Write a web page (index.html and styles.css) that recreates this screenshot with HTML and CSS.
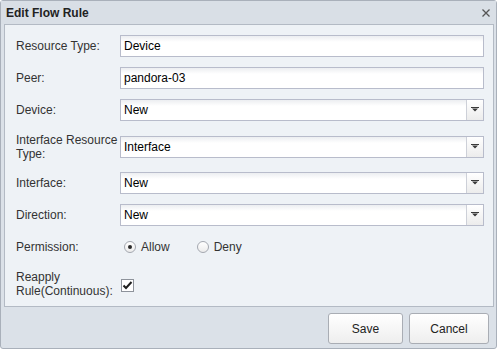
FILE: index.html
```html
<!DOCTYPE html>
<html>
<head>
<meta charset="utf-8">
<link rel="stylesheet" href="styles.css">
</head>
<body>
<div class="dialog">
  <div class="titlebar">
    <span class="title">Edit Flow Rule</span>
    <svg class="close" width="8" height="8" viewBox="0 0 8 8"><path d="M0.5 0.5L7.5 7.5M7.5 0.5L0.5 7.5" stroke="#555" stroke-width="1.3" fill="none"/></svg>
  </div>
  <div class="panel">
    <div class="row">
      <div class="label">Resource Type:</div>
      <div class="field">Device</div>
    </div>
    <div class="row">
      <div class="label">Peer:</div>
      <div class="field">pandora-03</div>
    </div>
    <div class="row">
      <div class="label">Device:</div>
      <div class="field select"><span class="val">New</span><span class="arrow"><svg width="8" height="5" viewBox="0 0 8 5"><path d="M0 0h8v1H0z M1 1.5h6L4 4.5z" fill="#3a3a3a"/></svg></span></div>
    </div>
    <div class="row tall">
      <div class="label">Interface Resource Type:</div>
      <div class="field select"><span class="val">Interface</span><span class="arrow"><svg width="8" height="5" viewBox="0 0 8 5"><path d="M0 0h8v1H0z M1 1.5h6L4 4.5z" fill="#3a3a3a"/></svg></span></div>
    </div>
    <div class="row">
      <div class="label">Interface:</div>
      <div class="field select"><span class="val">New</span><span class="arrow"><svg width="8" height="5" viewBox="0 0 8 5"><path d="M0 0h8v1H0z M1 1.5h6L4 4.5z" fill="#3a3a3a"/></svg></span></div>
    </div>
    <div class="row">
      <div class="label">Direction:</div>
      <div class="field select"><span class="val">New</span><span class="arrow"><svg width="8" height="5" viewBox="0 0 8 5"><path d="M0 0h8v1H0z M1 1.5h6L4 4.5z" fill="#3a3a3a"/></svg></span></div>
    </div>
    <div class="row">
      <div class="label">Permission:</div>
      <div class="radios">
        <span class="radio checked"></span><span class="rtext">Allow</span>
        <span class="radio"></span><span class="rtext">Deny</span>
      </div>
    </div>
    <div class="row tall bottom">
      <div class="label">Reapply Rule(Continuous):</div>
      <span class="checkbox"><svg width="11" height="11" viewBox="0 0 11 11"><path d="M1.5 5.5L4 8L9.5 2" stroke="#1e1e1e" stroke-width="2" fill="none"/></svg></span>
    </div>
  </div>
  <div class="footer">
    <button class="btn save">Save</button>
    <button class="btn cancel">Cancel</button>
  </div>
</div>
</body>
</html>
```
FILE: styles.css
```css
html, body {
  margin: 0;
  padding: 0;
  background: #ffffff;
}
body {
  font-family: "Liberation Sans", Arial, sans-serif;
  font-size: 12px;
  color: #333;
}
.dialog {
  width: 497px;
  height: 349px;
  box-sizing: border-box;
  border: 1px solid #a9b0ba;
  border-radius: 3px;
  background: #dbe1e8;
  display: flex;
  flex-direction: column;
}
.titlebar {
  height: 23px;
  display: flex;
  align-items: center;
  justify-content: space-between;
  padding: 0 6px 0 5px;
  background: #d9dfe6;
}
.title {
  font-weight: bold;
  color: #222;
  font-size: 12px;
}
.close {
  display: block;
  margin-top: 1px;
}
.panel {
  height: 283px;
  box-sizing: border-box;
  margin: 0 2px 0 3px;
  border: 1px solid #b3bac4;
  background: #eef2f6;
  padding: 10px 9px 0 11px;
  display: flex;
  flex-direction: column;
  gap: 10px;
}
.row {
  display: flex;
  align-items: center;
  height: 22px;
}
.row.tall {
  height: 31px;
}
.row.tall.bottom {
  height: 32px;
  align-items: flex-end;
}
.label {
  width: 104px;
  flex: none;
  line-height: 14px;
  color: #333;
}
.row.tall.bottom .label {
  line-height: 14px;
  padding-bottom: 2px;
}
.field {
  flex: 1;
  height: 22px;
  box-sizing: border-box;
  border: 1px solid #b8bccb;
  background: linear-gradient(#eceef1 0, #ffffff 6px);
  padding: 0 3px;
  line-height: 20px;
  color: #000;
  display: flex;
  align-items: center;
}
.field .val {
  flex: 1;
}
.arrow {
  width: 17px;
  height: 20px;
  margin-right: -3px;
  box-sizing: border-box;
  border-left: 1px solid #cdd0d8;
  background: linear-gradient(#ffffff, #ececec);
  display: flex;
  align-items: center;
  justify-content: center;
}
.arrow svg {
  display: block;
  margin-top: -1px;
}
.radios {
  display: flex;
  align-items: center;
  padding-left: 4px;
}
.radio {
  width: 12px;
  height: 12px;
  box-sizing: border-box;
  border: 1px solid #a4a8b0;
  border-radius: 50%;
  background: linear-gradient(#ffffff, #ececec);
  position: relative;
  flex: none;
}
.radio.checked::after {
  content: "";
  position: absolute;
  left: 3px;
  top: 3px;
  width: 4px;
  height: 4px;
  border-radius: 50%;
  background: #2a2a2a;
}
.rtext {
  margin-left: 5px;
  margin-right: 27px;
  color: #333;
}
.checkbox {
  width: 13px;
  height: 13px;
  box-sizing: border-box;
  border: 1px solid #8e939b;
  background: #fff;
  display: flex;
  align-items: center;
  justify-content: center;
  margin-left: 1px;
  margin-bottom: 8px;
}
.checkbox svg {
  display: block;
}
.footer {
  flex: 1;
  display: flex;
  justify-content: flex-end;
  align-items: flex-start;
  gap: 6px;
  padding: 6px 7px 0 0;
}
.btn {
  height: 31px;
  box-sizing: border-box;
  border: 1px solid #a9adb4;
  border-radius: 3px;
  background: linear-gradient(#ffffff, #eeeeee);
  font-family: "Liberation Sans", Arial, sans-serif;
  font-size: 12px;
  color: #222;
  padding: 0;
  margin: 0;
}
.btn.save {
  width: 75px;
}
.btn.cancel {
  width: 80px;
}
```
